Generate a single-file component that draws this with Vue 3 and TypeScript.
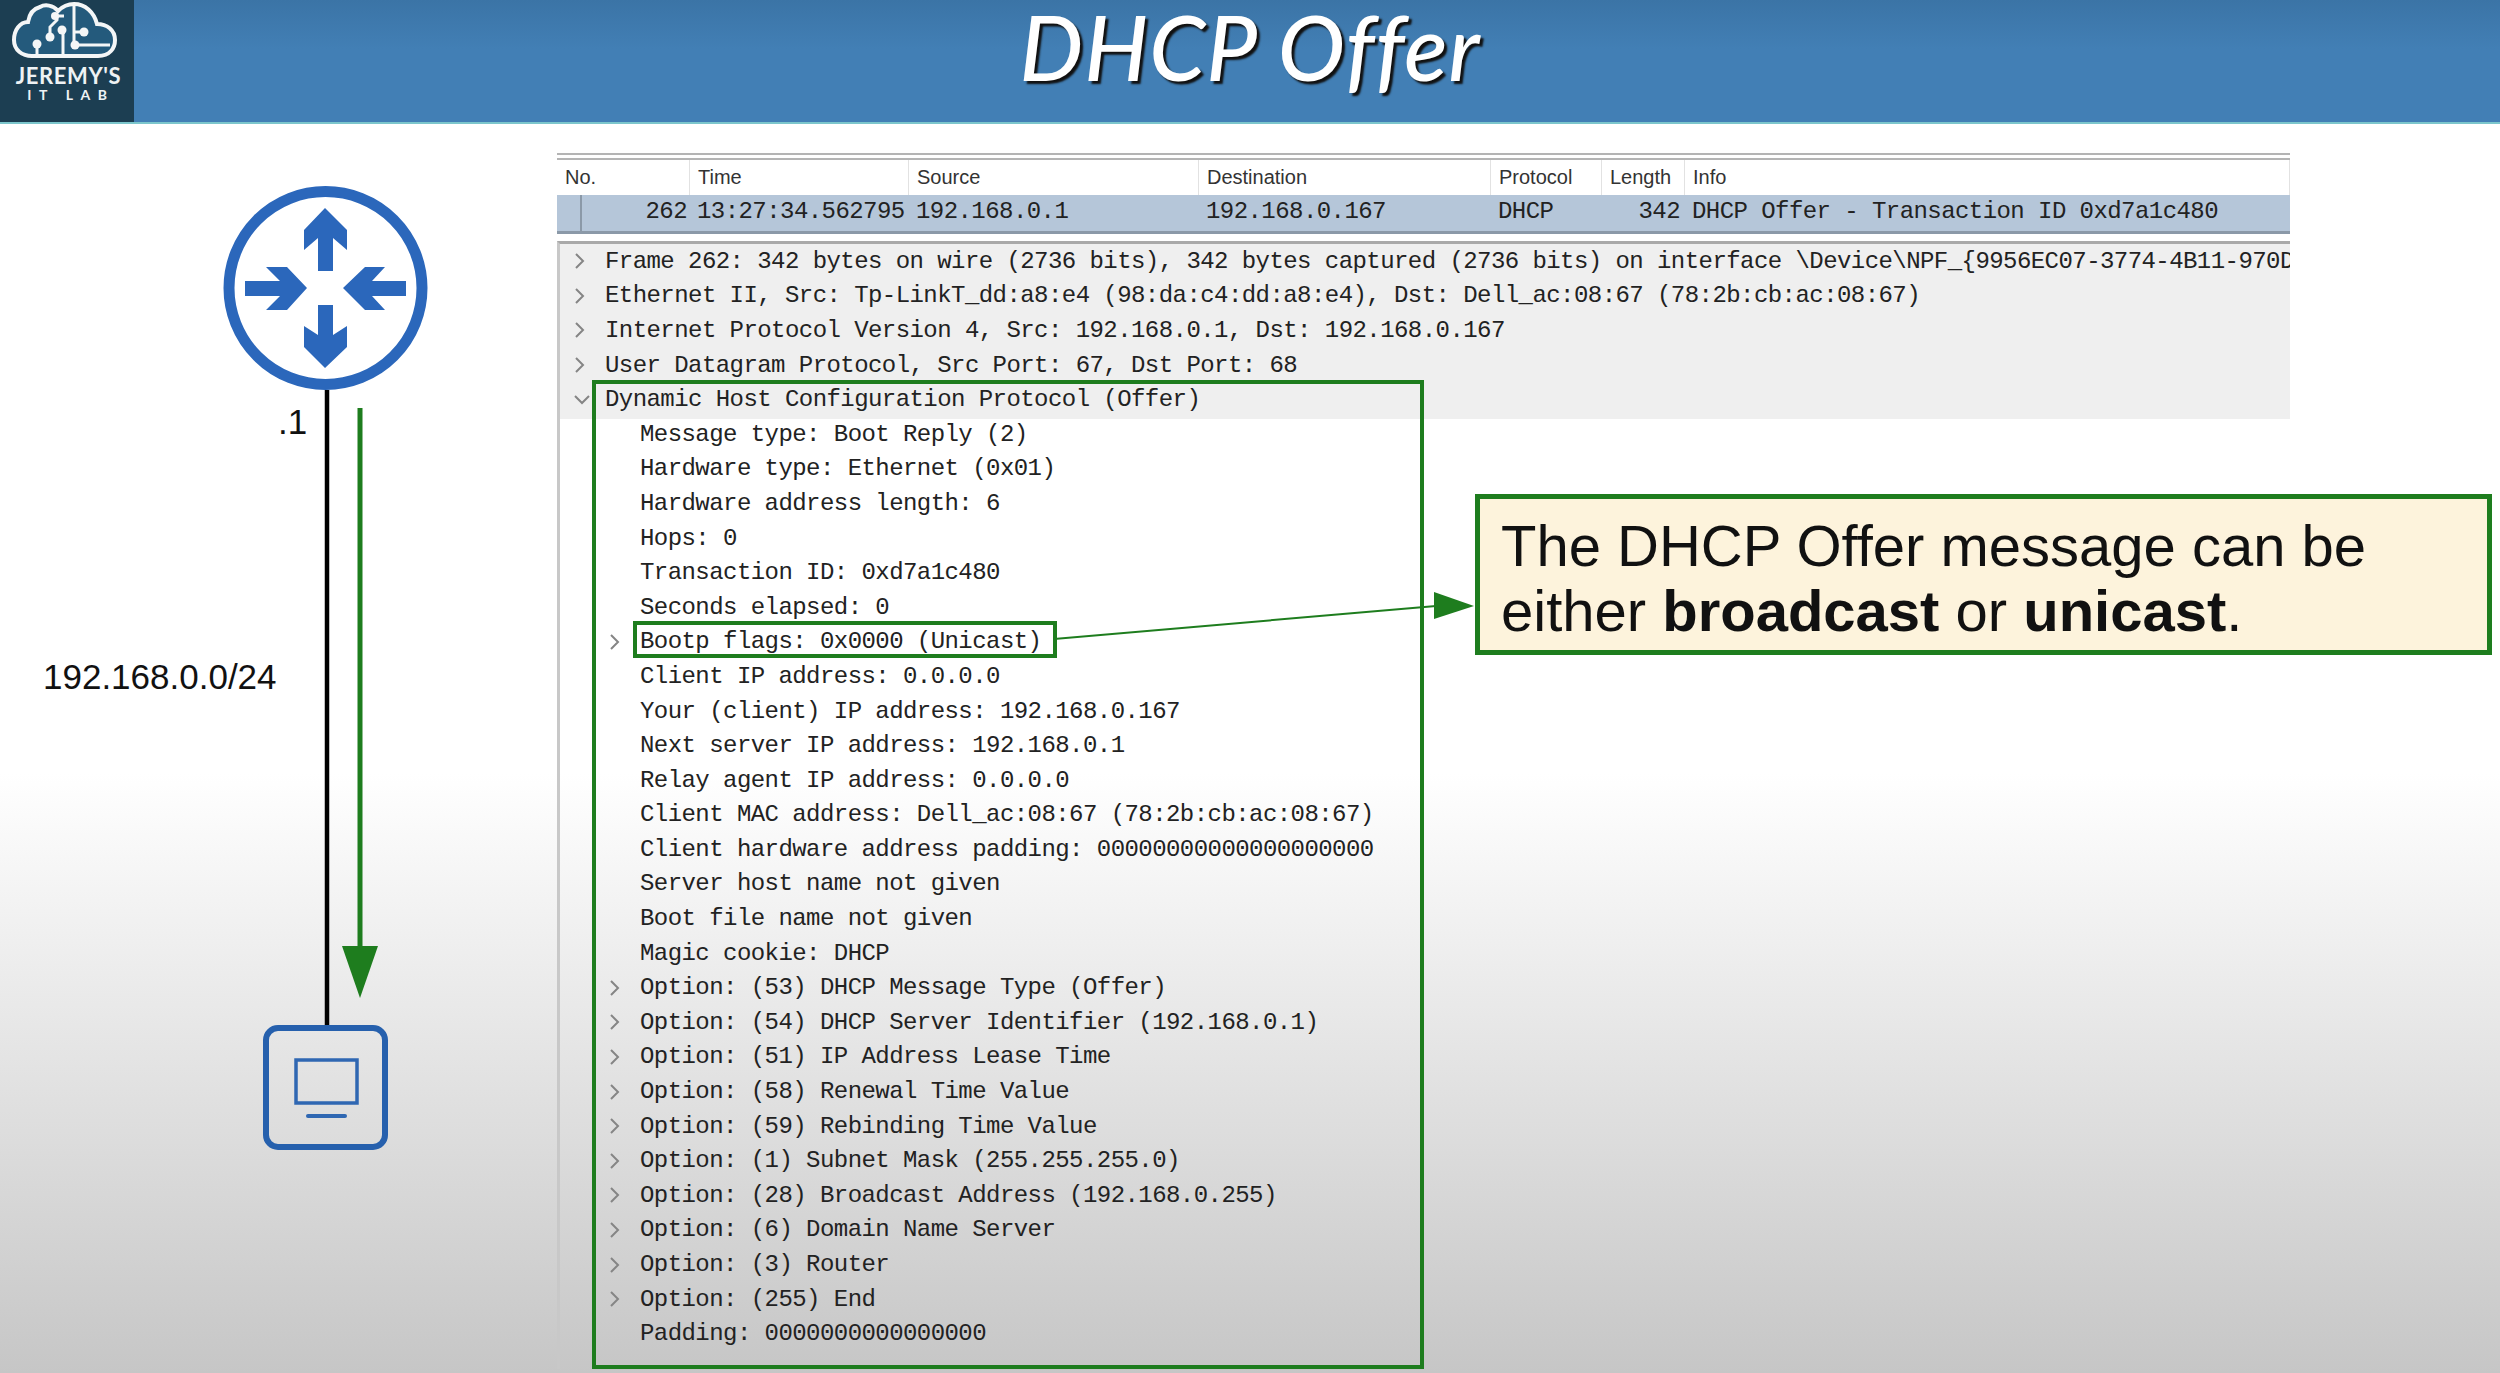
<script setup lang="ts">
type Row = { text: string; level: number; arrow?: 'right' | 'down'; flagged?: boolean }

const columns = ['No.', 'Time', 'Source', 'Destination', 'Protocol', 'Length', 'Info']

const outerRows: Row[] = [
  { text: 'Frame 262: 342 bytes on wire (2736 bits), 342 bytes captured (2736 bits) on interface \\Device\\NPF_{9956EC07-3774-4B11-970D-5C1A', level: 0, arrow: 'right' },
  { text: 'Ethernet II, Src: Tp-LinkT_dd:a8:e4 (98:da:c4:dd:a8:e4), Dst: Dell_ac:08:67 (78:2b:cb:ac:08:67)', level: 0, arrow: 'right' },
  { text: 'Internet Protocol Version 4, Src: 192.168.0.1, Dst: 192.168.0.167', level: 0, arrow: 'right' },
  { text: 'User Datagram Protocol, Src Port: 67, Dst Port: 68', level: 0, arrow: 'right' },
]

const dhcpRows: Row[] = [
  { text: 'Dynamic Host Configuration Protocol (Offer)', level: 0, arrow: 'down' },
  { text: 'Message type: Boot Reply (2)', level: 1 },
  { text: 'Hardware type: Ethernet (0x01)', level: 1 },
  { text: 'Hardware address length: 6', level: 1 },
  { text: 'Hops: 0', level: 1 },
  { text: 'Transaction ID: 0xd7a1c480', level: 1 },
  { text: 'Seconds elapsed: 0', level: 1 },
  { text: 'Bootp flags: 0x0000 (Unicast)', level: 1, arrow: 'right', flagged: true },
  { text: 'Client IP address: 0.0.0.0', level: 1 },
  { text: 'Your (client) IP address: 192.168.0.167', level: 1 },
  { text: 'Next server IP address: 192.168.0.1', level: 1 },
  { text: 'Relay agent IP address: 0.0.0.0', level: 1 },
  { text: 'Client MAC address: Dell_ac:08:67 (78:2b:cb:ac:08:67)', level: 1 },
  { text: 'Client hardware address padding: 00000000000000000000', level: 1 },
  { text: 'Server host name not given', level: 1 },
  { text: 'Boot file name not given', level: 1 },
  { text: 'Magic cookie: DHCP', level: 1 },
  { text: 'Option: (53) DHCP Message Type (Offer)', level: 1, arrow: 'right' },
  { text: 'Option: (54) DHCP Server Identifier (192.168.0.1)', level: 1, arrow: 'right' },
  { text: 'Option: (51) IP Address Lease Time', level: 1, arrow: 'right' },
  { text: 'Option: (58) Renewal Time Value', level: 1, arrow: 'right' },
  { text: 'Option: (59) Rebinding Time Value', level: 1, arrow: 'right' },
  { text: 'Option: (1) Subnet Mask (255.255.255.0)', level: 1, arrow: 'right' },
  { text: 'Option: (28) Broadcast Address (192.168.0.255)', level: 1, arrow: 'right' },
  { text: 'Option: (6) Domain Name Server', level: 1, arrow: 'right' },
  { text: 'Option: (3) Router', level: 1, arrow: 'right' },
  { text: 'Option: (255) End', level: 1, arrow: 'right' },
  { text: 'Padding: 0000000000000000', level: 1 },
]
</script>

<template>
  <div class="page">
    <header class="top-bar">
      <div class="logo">
        <svg class="logo-cloud" viewBox="0 0 134 62" width="134" height="62">
          <path class="cloud-fill" d="M32 56H98C110 56 115 48 115 40C115 30 107 24 97 24C94 12 85 4 74 4C67 4 62 7 58 11C53 5 45 4 40 7C32 9 29 16 28 22C20 22 14 30 14 40C14 50 22 56 32 56Z" />
          <g class="cloud-lines">
            <path d="M63 56V30" />
            <path d="M37 56V44" />
            <path d="M50 36V27L57 20V16H64" />
            <path d="M74 5V45H110" />
            <path d="M74 32H84" />
          </g>
          <g class="cloud-dots">
            <circle cx="62" cy="30" r="4.5" />
            <circle cx="37" cy="44" r="4.5" />
            <circle cx="50" cy="37" r="4.5" />
            <circle cx="55" cy="16" r="4" />
            <circle cx="75" cy="45" r="4.5" />
            <circle cx="84" cy="32" r="4.5" />
          </g>
        </svg>
        <div class="logo-name">JEREMY'S</div>
        <div class="logo-sub">IT LAB</div>
      </div>
      <h1 class="title">DHCP Offer</h1>
    </header>

    <main class="stage">
      <svg class="diagram" viewBox="0 124 557 1249" width="557" height="1249">
        <line x1="327" y1="390" x2="327" y2="1026" stroke="#000" stroke-width="4.5" />
        <line x1="360" y1="408" x2="360" y2="950" stroke="#1e7d1e" stroke-width="5" />
        <polygon points="342,946 378,946 360,998" fill="#1e7d1e" />

        <circle cx="325.5" cy="288" r="96.5" fill="#fff" stroke="#2b67bb" stroke-width="11" />
        <g fill="#2b67bb">
          <polygon points="325,208 347,230 347,250 333,238 333,271 318,271 318,238 304,250 304,230" />
          <polygon points="325,368 347,347 347,326 333,335 333,305 318,305 318,335 304,326 304,347" />
          <polygon points="307,288 287,267 266,267 280,281 245,281 245,296 280,296 266,310 287,310" />
          <polygon points="343,288 365,267 385,267 372,281 406,281 406,296 372,296 385,310 365,310" />
        </g>

        <rect x="266" y="1028" width="119" height="119" rx="12" fill="none" stroke="#2660ad" stroke-width="6" />
        <rect x="296" y="1060" width="61" height="43" fill="none" stroke="#2f67b2" stroke-width="3.5" />
        <line x1="308" y1="1116" x2="345" y2="1116" stroke="#2f67b2" stroke-width="4" stroke-linecap="round" />

        <text class="net-label" x="278" y="434">.1</text>
        <text class="net-label" x="43" y="689">192.168.0.0/24</text>
      </svg>

      <section class="capture">
        <div class="packet-head">
          <div v-for="col in columns" :key="col" class="head-cell">{{ col }}</div>
        </div>
        <div class="packet-row">
          <span class="cell num">262</span>
          <span class="cell">13:27:34.562795</span>
          <span class="cell">192.168.0.1</span>
          <span class="cell dest">192.168.0.167</span>
          <span class="cell">DHCP</span>
          <span class="cell len">342</span>
          <span class="cell">DHCP Offer    - Transaction ID 0xd7a1c480</span>
        </div>

        <div class="details">
          <div
            v-for="row in outerRows"
            :key="row.text"
            class="tree-row"
          >
            <svg class="chevron" viewBox="0 0 12 18" width="12" height="18">
              <polyline points="3,2 10,9 3,16" />
            </svg>
            <span>{{ row.text }}</span>
          </div>

          <div class="dhcp">
            <div
              v-for="row in dhcpRows"
              :key="row.text"
              class="tree-row"
              :class="{ nested: row.level === 1 }"
            >
              <svg v-if="row.arrow === 'right'" class="chevron" viewBox="0 0 12 18" width="12" height="18">
                <polyline points="3,2 10,9 3,16" />
              </svg>
              <svg v-else-if="row.arrow === 'down'" class="chevron" viewBox="0 0 18 12" width="18" height="12">
                <polyline points="2,2 9,9 16,2" />
              </svg>
              <span v-else class="no-chevron"></span>
              <span :class="{ flagged: row.flagged }">{{ row.text }}</span>
            </div>
          </div>
        </div>
      </section>

      <div class="callout">
        The DHCP Offer message can be<br />
        either <b>broadcast</b> or <b>unicast</b>.
      </div>
      <svg class="pointer" viewBox="1054 585 424 60" width="424" height="60">
        <line x1="1054" y1="639" x2="1436" y2="606" stroke="#1e7d1e" stroke-width="2" />
        <polygon points="1434,592 1474,606 1434,619" fill="#1e7d1e" />
      </svg>
    </main>
  </div>
</template>

<style scoped>
.page {
  width: 2500px;
  height: 1373px;
  display: flex;
  flex-direction: column;
  overflow: hidden;
  font-family: "Liberation Sans", Arial, sans-serif;
}

/* Header */
.top-bar {
  flex: 0 0 124px;
  box-sizing: border-box;
  display: flex;
  background: linear-gradient(#3b74a6, #427fb5 40%, #427fb5);
  border-bottom: 2px solid #7cc6cc;
}
.logo {
  width: 134px;
  background: #1c3e52;
  color: #fff;
  text-align: center;
  font-family: Lato, sans-serif;
  font-weight: 700;
}
.logo-cloud { display: block; }
.cloud-fill { fill: #245a7c; stroke: #f4f6f7; stroke-width: 4; }
.cloud-lines path { fill: none; stroke: #f4f6f7; stroke-width: 3; }
.cloud-dots circle { fill: #f4f6f7; }
.logo-name {
  margin-top: 3px;
  padding-left: 3px;
  font-size: 22px;
  line-height: 22px;
  letter-spacing: 0.6px;
  color: #eef2f4;
  white-space: nowrap;
}
.logo-sub {
  padding-left: 8px;
  font-size: 14px;
  line-height: 15px;
  letter-spacing: 7.6px;
  color: #eef2f4;
  white-space: nowrap;
}
.title {
  flex: 1;
  margin: 0;
  padding-right: 134px;
  text-align: center;
  font-family: Lato, sans-serif;
  font-style: italic;
  font-weight: 500;
  font-size: 90px;
  line-height: 92px;
  letter-spacing: 1px;
  color: #fff;
  text-shadow: 3px 3px 2px #111;
}

/* Stage */
.stage {
  flex: 1;
  position: relative;
  display: flex;
  align-items: flex-start;
  background: linear-gradient(#fff, #fff 52%, #c6c6c6);
}
.diagram { flex: 0 0 557px; display: block; }
.net-label { font-size: 35px; fill: #111; }

/* Wireshark capture */
.capture {
  width: 1733px;
  margin-top: 29px;
  font-family: "Liberation Mono", monospace;
  font-size: 24px;
  letter-spacing: -0.56px;
  color: #222;
}
.packet-head,
.packet-row {
  display: grid;
  grid-template-columns: 133px 219px 290px 292px 111px 83px 605px;
}
.packet-head {
  height: 42px;
  box-sizing: border-box;
  border-top: 7px double #b4b4b4;
  background: #fff;
}
.head-cell {
  padding-left: 8px;
  border-right: 1px solid #e2e2e2;
  font-family: "Liberation Sans", sans-serif;
  font-size: 20px;
  letter-spacing: 0;
  line-height: 35px;
  color: #333;
}
.packet-row {
  height: 36px;
  border-bottom: 3px solid #8b99a8;
  line-height: 34px;
  white-space: pre;
  background: #b5c6d9;
  box-shadow: inset 23px 0 0 #b5c6d9, inset 25px 0 0 #8b99a8;
}
.cell { padding-left: 7px; }
.cell.num { text-align: right; padding-right: 3px; }
.cell.len { text-align: right; padding-right: 5px; }
.cell.dest { padding-left: 7px; }

.details {
  margin-top: 7px;
  border-top: 3px solid #a9a9a9;
  border-left: 3px solid #c8c8c8;
  background: linear-gradient(#efefef, #efefef) no-repeat;
  background-size: 100% 175px;
  overflow: hidden;
}
.tree-row {
  display: flex;
  align-items: center;
  height: 34.6px;
  padding-left: 13px;
  white-space: pre;
}
.tree-row.nested { padding-left: 48px; }
.chevron {
  flex: 0 0 auto;
  margin-right: 20px;
  fill: none;
  stroke: #858585;
  stroke-width: 2;
}
.chevron[width="18"] { margin-right: 14px; }
.no-chevron { flex: 0 0 32px; }

.dhcp {
  position: relative;
  padding-bottom: 18px;
}
.dhcp::after {
  content: "";
  position: absolute;
  top: -2px;
  bottom: 0;
  left: 32px;
  width: 832px;
  box-sizing: border-box;
  border: 4px solid #1e7d1e;
}
.flagged { position: relative; }
.flagged::after {
  content: "";
  position: absolute;
  top: -7px;
  bottom: -3px;
  left: -7px;
  right: -16px;
  border: 4px solid #1e7d1e;
}

/* Callout */
.callout {
  position: absolute;
  left: 1475px;
  top: 370px;
  width: 1017px;
  height: 161px;
  box-sizing: border-box;
  padding: 14px 0 0 21px;
  border: 5px solid #1e7d1e;
  background: #fdf3dc;
  font-size: 58px;
  line-height: 65px;
  color: #111;
}
.pointer {
  position: absolute;
  left: 1054px;
  top: 461px;
}
</style>

<style>
html, body { margin: 0; background: #fff; }
</style>
